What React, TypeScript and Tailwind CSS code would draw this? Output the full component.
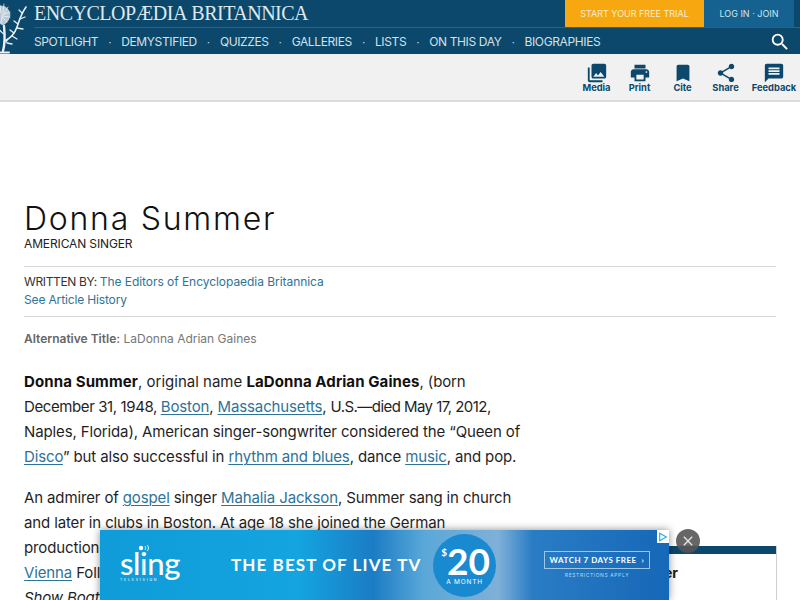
import React from "react";
import { MdPhotoLibrary, MdPrint, MdBookmark, MdShare, MdMessage, MdSearch, MdClose } from "react-icons/md";

const nav = ["SPOTLIGHT", "DEMYSTIFIED", "QUIZZES", "GALLERIES", "LISTS", "ON THIS DAY", "BIOGRAPHIES"];
const tools = [
  { label: "Media", Icon: MdPhotoLibrary, w: "w-[43px]" },
  { label: "Print", Icon: MdPrint, w: "w-[43px]" },
  { label: "Cite", Icon: MdBookmark, w: "w-[43px]" },
  { label: "Share", Icon: MdShare, w: "w-[43px]" },
  { label: "Feedback", Icon: MdMessage, w: "w-[50px] ml-[2px]" },
];

function Thistle() {
  return (
    <svg viewBox="0 0 30 54" className="w-[30px] h-[54px]" fill="none" stroke="#eaf0f4" strokeLinecap="round">
      <path d="M3 51 C5 44 5 36 4 26" strokeWidth="2.4" />
      <path d="M4.5 41 C11 38 15 33 17 27 C19 21 21 14 26 7" strokeWidth="1.6" />
      <path d="M4 34 C1 32 -1 30 -2 27" strokeWidth="1.2" />
      <path d="M20 19 l5 -2 M18 24 l-4 -3 M17 28 l6 1 M14 33 l-4 -3 M12 36 l5 3 M8 39 l-2 3 M7 43 l5 1 M22 13 l-3 -3" strokeWidth="1.3" />
      <path d="M-2 7 C3 4 9 8 10 14 C10 19 7 23 3 25 C0 24 -2 21 -2 17Z" fill="#b9cad6" strokeWidth="0.5" />
      <path d="M0 5l1 8M4 4l-1 9M8 7l-4 7M10 12l-8 3M10 17l-8 -1M7 22l-5 -5M1 24l1 -7" stroke="#f4f7f9" strokeWidth="0.7" />
      <path d="M0 52.5 H9" strokeWidth="2" />
    </svg>
  );
}

function Link({ children }: { children: React.ReactNode }) {
  return <span className="text-[#2d7397] underline underline-offset-2 decoration-1">{children}</span>;
}

export default function App() {
  return (
    <div className="relative w-[800px] h-[600px] overflow-hidden bg-white font-['Inter','Liberation_Sans',sans-serif] text-[#1a1a1a]">
      <header className="h-[54px] bg-[#0b486b] flex">
        <div className="w-[34px] shrink-0 overflow-hidden">
          <Thistle />
        </div>
        <div className="flex-1 flex flex-col">
          <div className="h-[28px] flex justify-between border-b border-[#2a6283]">
            <span className="font-['Liberation_Serif',serif] text-[20px] leading-[27px] tracking-[-0.5px] [word-spacing:1px] text-[#dfe8ee]">ENCYCLOPÆDIA BRITANNICA</span>
            <div className="flex mr-[6px] text-[9px]">
              <div className="w-[139px] bg-[#f7a70f] text-[#fbeed0] flex items-center justify-center">START YOUR FREE TRIAL</div>
              <div className="w-[90px] bg-[#15618f] text-[#d6e4ee] flex items-center justify-center">LOG IN · JOIN</div>
            </div>
          </div>
          <nav className="flex-1 flex items-center justify-between pt-[2px] text-[12px] tracking-[-0.37px] text-[#d5e0e8]">
            <div className="flex items-center">
              {nav.map((n, i) => (
                <React.Fragment key={n}>
                  {i > 0 && <span className="w-[23px] text-center text-[10px]">·</span>}
                  <span>{n}</span>
                </React.Fragment>
              ))}
            </div>
            <MdSearch className="w-[22px] h-[22px] mr-[9px] text-white" />
          </nav>
        </div>
      </header>

      <div className="h-[48px] bg-[#f1f1f1] border-b-2 border-[#dcdcdc] flex justify-end items-center pr-[1px]">
        {tools.map(({ label, Icon, w }) => (
          <div key={label} className={`${w} flex flex-col items-center text-[#0b486b]`}>
            <Icon className="w-[22px] h-[22px]" />
            <span className="mt-[-1px] text-[9.3px] leading-[10px] font-bold">{label}</span>
          </div>
        ))}
      </div>

      <main className="px-6 flex">
        <div className="w-[752px] shrink-0">
          <h1 className="mt-[98px] text-[32px] leading-[38px] font-light tracking-[1.75px] text-[#111]">Donna Summer</h1>
          <p className="text-[12px] leading-[16px] mt-[-2px] tracking-[-0.13px] text-[#222]">AMERICAN SINGER</p>
          <div className="mt-[14px] border-t border-[#d6d6d6] pt-[6px] pb-[7px] text-[12px] leading-[18px] border-b">
            <div><span className="text-[#333] tracking-[-0.35px]">WRITTEN BY: </span><span className="text-[#2f7397] tracking-[-0.05px]">The Editors of Encyclopaedia Britannica</span></div>
            <div className="text-[#2f7397] tracking-[-0.15px]">See Article History</div>
          </div>
          <p className="mt-[13px] text-[12px] leading-[18px] text-[#777]"><b className="font-semibold text-[#666]">Alternative Title:</b> LaDonna Adrian Gaines</p>
          <article className="mt-[21px] text-[15px] leading-[25px] text-[#1f1f1f] tracking-[-0.13px]">
            <p>
              <b className="tracking-[0.12px] text-[#111]">Donna Summer</b><span className="tracking-[0px]">, original name </span><b className="tracking-[0.1px] text-[#111]">LaDonna Adrian Gaines</b>, (born<br />
              <span className="tracking-[-0.4px]">December 31, 1948, </span><Link>Boston</Link>, <Link>Massachusetts</Link>, <span className="tracking-[-0.55px]">U.S.—died May 17, 2012,</span><br />
              Naples, Florida), American singer-songwriter considered the “Queen of<br />
              <Link>Disco</Link>” but also successful in <Link>rhythm and blues</Link>, dance <Link>music</Link>, and pop.
            </p>
            <p className="mt-[16px]">
              An admirer of <Link>gospel</Link> singer <Link>Mahalia Jackson</Link>, Summer sang in church<br />
              and later in clubs in Boston. At age 18 she joined the German<br />
              production of the musical <i>Hair</i>, moving to<br />
              <Link>Vienna</Link> Follies and <br />
              <i>Show Boat</i>
            </p>
          </article>
        </div>
      </main>

      <aside className="absolute left-[546px] top-[546px] w-[231px] h-[60px] bg-white border border-[#cfcfcf] border-t-0">
        <div className="h-[8px] bg-[#0b486b]" />
        <p className="mt-[10px] text-[14px] leading-[18px] font-bold text-right pr-[98px] text-[#1a1a1a]">Donna Summer</p>
      </aside>

      <div className="absolute left-[100px] top-[530px] w-[569px] h-[70px] bg-[linear-gradient(90deg,#0f9cd9_0%,#14a4e0_35%,#1b7cc5_48%,#5aa8d8_57%,#7fb0d8_70%,#2a7cc4_76%,#1668b8_100%)] text-white flex items-center shadow-[0_0_8px_rgba(0,0,0,0.45)]">
        <div className="ml-[20px] w-[60px] flex flex-col items-start relative">
          <svg viewBox="0 0 16 8" className="absolute left-[18px] top-[-5px] w-[16px] h-[8px]" fill="none" stroke="#fff" strokeWidth="0.8">
            <circle cx="3" cy="4" r="2.2" fill="#fff" stroke="none" />
            <path d="M7 2 a3 3 0 0 1 0 4 M9.5 1 a5 5 0 0 1 0 6" />
          </svg>
          <span className="font-['Lato',sans-serif] text-[31px] leading-[28px] font-medium tracking-[-0.4px]">sling</span>
          <span className="mt-[1px] text-[3.5px] tracking-[1.8px] leading-[4px]">TELEVISION</span>
        </div>
        <span className="ml-[51px] w-[190px] shrink-0 whitespace-nowrap font-['Lato',sans-serif] text-[17px] font-bold tracking-[1.1px]">THE BEST OF LIVE TV</span>
        <div className="relative ml-[12px] w-[63px] h-[63px] rounded-full bg-[#1a8ad0] flex flex-col items-center justify-center shrink-0">
          <span className="font-['Lato',sans-serif] text-[37px] leading-[34px] font-bold ml-[2px]"><sup className="text-[10px] align-[14px]">$</sup>20</span>
          <span className="text-[6.5px] tracking-[0.8px] leading-[8px]">A MONTH</span>
        </div>
        <div className="ml-[48px] flex flex-col items-center">
          <div className="w-[106px] h-[18px] border border-[#9cc8e8] flex items-center justify-center font-['Lato',sans-serif] text-[8px] font-bold tracking-[0.5px]">WATCH 7 DAYS FREE &nbsp;›</div>
          <span className="mt-[3px] text-[5px] tracking-[0.6px] text-[#b7d8f0]">RESTRICTIONS APPLY</span>
        </div>
        <div className="absolute right-0 top-0 w-[12px] h-[13px] bg-white flex items-center justify-center">
          <svg viewBox="0 0 12 12" className="w-[10px] h-[10px]"><path d="M2 1.5 L10 6 L2 10.5Z" fill="none" stroke="#25aee3" strokeWidth="1.4" /></svg>
        </div>
      </div>
      <div className="absolute left-[676px] top-[529px] w-[24px] h-[24px] rounded-full bg-[#555555]/90 flex items-center justify-center">
        <MdClose className="w-[16px] h-[16px] text-[#e6e6e6]" />
      </div>
    </div>
  );
}
